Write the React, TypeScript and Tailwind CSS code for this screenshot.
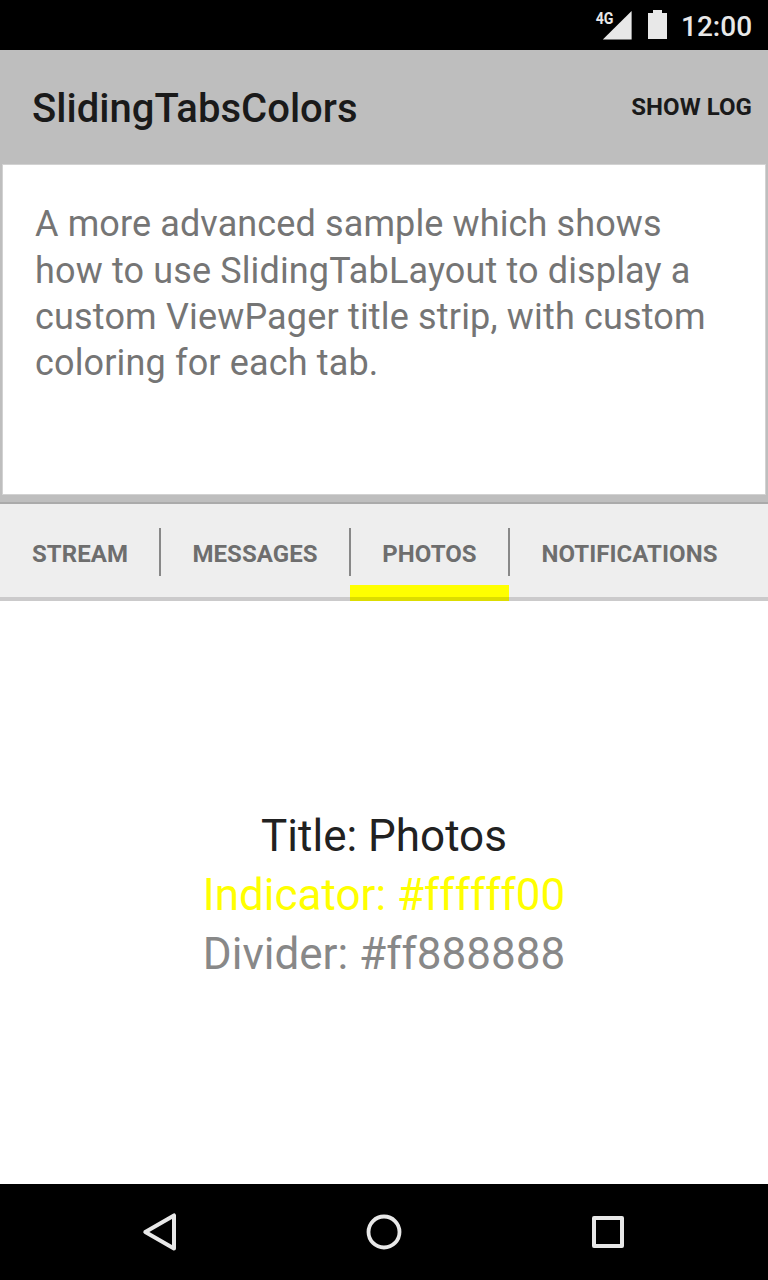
import React from "react";

const tabs = [
  { label: "STREAM", width: "w-[160px]" },
  { label: "MESSAGES", width: "w-[190px]" },
  { label: "PHOTOS", width: "w-[159px]" },
  { label: "NOTIFICATIONS", width: "w-[241px]" },
];
const activeTab = "PHOTOS";

function StatusBar() {
  return (
    <header className="flex h-[50px] shrink-0 items-center bg-black text-[#e8e8e8]">
      <svg className="ml-[592px] h-[50px] w-[84px] shrink-0" viewBox="592 0 84 50" fill="#e8e8e8">
        <path d="M631.6 11V39.6H602.8Z" />
        <path d="M653 10h9v3h5v26h-19V13h5z" />
        <text x="595.7" y="23.7" fontSize="17" fontWeight="700" textLength="17.8" lengthAdjust="spacingAndGlyphs">4G</text>
      </svg>
      <span className="ml-[5px] pt-[3px] text-[28px] font-medium leading-8">12:00</span>
    </header>
  );
}

function ActionBar() {
  return (
    <div className="flex h-[114px] shrink-0 items-center justify-between bg-[#bebebe] pl-8 pr-4 text-[#1a1a1a]">
      <h1 className="pt-1 text-[40px] font-medium leading-none tracking-[0.03px]">SlidingTabsColors</h1>
      <button className="text-[24px] font-bold leading-none tracking-[0.05px]">SHOW LOG</button>
    </div>
  );
}

function Description() {
  return (
    <section className="h-[338px] shrink-0 bg-[#bebebe] px-[2px] pb-[7px]">
      <p className="h-[331px] whitespace-nowrap border border-[#d2d2d2] bg-white px-8 pt-9 text-[36px] leading-[46px] text-[#757575]">
        <span className="block h-[47px] tracking-[0.12px]">A more advanced sample which shows</span>
        <span className="block tracking-[0.14px]">how to use SlidingTabLayout to display a</span>
        <span className="block tracking-[0.17px]">custom ViewPager title strip, with custom</span>
        <span className="block tracking-[0.15px]">coloring for each tab.</span>
      </p>
    </section>
  );
}

function TabStrip() {
  return (
    <nav className="flex h-[99px] shrink-0 border-t-2 border-[#aaaaaa] bg-[#eeeeee]">
      <div className="flex grow shadow-[inset_0_-4px_0_#cbcacb]">
        {tabs.map((tab, i) => (
          <button key={tab.label} className={`${tab.width} relative shrink-0 pt-[2px] text-[24px] font-bold tracking-[0.05px] text-[#6e6e6e]`}>
            {tab.label}
            {tab.label === activeTab && (
              <span className="absolute inset-x-0 bottom-0 h-4 border-b-4 border-[#dddd00] bg-[#ffff00]" />
            )}
            {i < tabs.length - 1 && (
              <span className="absolute -right-px top-6 z-10 h-12 w-[2px] bg-[#888888]" />
            )}
          </button>
        ))}
      </div>
    </nav>
  );
}

function NavigationBar() {
  return (
    <footer className="flex h-24 shrink-0 items-center justify-center gap-44 bg-black">
      <button aria-label="Back">
        <svg className="block h-12 w-12" viewBox="0 0 48 48" fill="none" stroke="#e8e8e8" strokeWidth="4" strokeLinejoin="round">
          <path d="M9.3 24 38 7.4V40.6Z" />
        </svg>
      </button>
      <button aria-label="Home">
        <svg className="block h-12 w-12" viewBox="0 0 48 48" fill="none" stroke="#e8e8e8" strokeWidth="3.8">
          <circle cx="24" cy="24" r="15.5" />
        </svg>
      </button>
      <button aria-label="Overview">
        <svg className="block h-12 w-12" viewBox="0 0 48 48" fill="none" stroke="#e8e8e8" strokeWidth="4" strokeLinejoin="round">
          <rect x="10" y="10" width="28" height="28" />
        </svg>
      </button>
    </footer>
  );
}

export default function App() {
  return (
    <div className="flex h-[1280px] w-[768px] flex-col overflow-hidden bg-white font-['Roboto',sans-serif]">
      <StatusBar />
      <ActionBar />
      <Description />
      <TabStrip />
      <main className="flex grow flex-col items-center justify-center pt-[6px] text-[44px] leading-[59px]">
        <p className="text-[#212121]">Title: Photos</p>
        <p className="text-[#ffff00]">Indicator: #ffffff00</p>
        <p className="text-[#888888]">Divider: #ff888888</p>
      </main>
      <NavigationBar />
    </div>
  );
}
